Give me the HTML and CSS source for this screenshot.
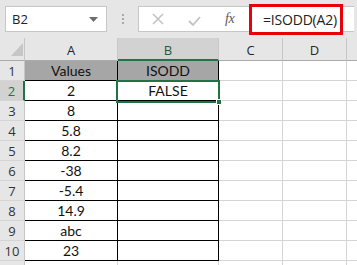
FILE: index.html
```html
<!DOCTYPE html>
<html>
<head>
<meta charset="utf-8">
<link rel="stylesheet" href="styles.css">
</head>
<body>
<div class="app">
  <div class="toolbar">
    <div class="namebox"><span>B2</span><svg class="dd" width="9" height="5" viewBox="0 0 9 5"><path d="M0 0H9L4.5 5Z" fill="#6d6d6d"/></svg></div>
    <div class="dots"><i></i><i></i><i></i></div>
    <div class="fbar">
      <svg class="ic-x" width="12" height="12" viewBox="0 0 12 12"><path d="M1 1L11 11M11 1L1 11" stroke="#c3c3c3" stroke-width="1.6"/></svg>
      <svg class="ic-ok" width="13" height="10" viewBox="0 0 13 10"><path d="M1 5L5 9L12 1" stroke="#c3c3c3" stroke-width="1.8" fill="none"/></svg>
      <span class="fx">fx</span>
      <div class="formula">=ISODD(A2)</div>
    </div>
  </div>
  <div class="grid">
    <div class="corner"><svg width="12" height="13" viewBox="0 0 12 13"><path d="M12 0V13H0Z" fill="#c6c6c6"/></svg></div>
    <div class="ch">A</div>
    <div class="ch sel">B</div>
    <div class="ch">C</div>
    <div class="ch">D</div>
    <div class="ch last"></div>

    <div class="rh">1</div><div class="c t hd">Values</div><div class="c t hd">ISODD</div><div class="c"></div><div class="c"></div><div class="c last"></div>
    <div class="rh sel">2</div><div class="c t">2</div><div class="c t">FALSE</div><div class="c"></div><div class="c"></div><div class="c last"></div>
    <div class="rh">3</div><div class="c t">8</div><div class="c t"></div><div class="c"></div><div class="c"></div><div class="c last"></div>
    <div class="rh">4</div><div class="c t">5.8</div><div class="c t"></div><div class="c"></div><div class="c"></div><div class="c last"></div>
    <div class="rh">5</div><div class="c t">8.2</div><div class="c t"></div><div class="c"></div><div class="c"></div><div class="c last"></div>
    <div class="rh">6</div><div class="c t">-38</div><div class="c t"></div><div class="c"></div><div class="c"></div><div class="c last"></div>
    <div class="rh">7</div><div class="c t">-5.4</div><div class="c t"></div><div class="c"></div><div class="c"></div><div class="c last"></div>
    <div class="rh">8</div><div class="c t">14.9</div><div class="c t"></div><div class="c"></div><div class="c"></div><div class="c last"></div>
    <div class="rh">9</div><div class="c t">abc</div><div class="c t"></div><div class="c"></div><div class="c"></div><div class="c last"></div>
    <div class="rh">10</div><div class="c t">23</div><div class="c t"></div><div class="c"></div><div class="c"></div><div class="c last"></div>
    <div class="rh"></div><div class="c"></div><div class="c"></div><div class="c"></div><div class="c"></div><div class="c last"></div>

    <div class="selbox"><i class="handle"></i></div>
  </div>
</div>
</body>
</html>
```
FILE: styles.css
```css
* { box-sizing: border-box; }
html, body { margin: 0; padding: 0; }
body { width: 357px; height: 265px; overflow: hidden; background: #fff; }
.app { width: 357px; height: 265px; overflow: hidden; }

.toolbar {
  height: 38px;
  background: #e6e6e6;
  position: relative;
  display: flex;
  align-items: flex-start;
  padding-top: 6px;
}
.namebox {
  margin-left: 5px;
  width: 102px;
  height: 26px;
  background: #fff;
  border: 1px solid #c6c6c6;
  display: flex;
  align-items: center;
  justify-content: space-between;
  padding: 0 8px 0 6px;
  font: 13px "Open Sans", "Liberation Sans", sans-serif;
  color: #222;
}
.dots {
  width: 31px;
  height: 26px;
  display: flex;
  flex-direction: column;
  align-items: center;
  justify-content: center;
  gap: 2px;
}
.dots i { display: block; width: 2px; height: 2px; background: #a9a9a9; }
.fbar {
  width: 216px;
  height: 26px;
  background: #fff;
  border: 1px solid #c6c6c6;
  border-right: none;
  display: flex;
  align-items: center;
  position: relative;
}
.ic-x { margin-left: 13px; }
.ic-ok { margin-left: 24px; margin-top: 3px; }
.fx {
  margin-left: 24px;
  font: italic 14px "Liberation Serif", "DejaVu Serif", serif;
  color: #5a5a5a;
  letter-spacing: -0.5px;
}
.formula {
  position: absolute;
  left: 110px;
  top: -3px;
  width: 94px;
  height: 31px;
  border: 3px solid #e8000b;
  background: #fff;
  font: 14px "Open Sans", "Liberation Sans", sans-serif;
  color: #222;
  display: flex;
  align-items: center;
  padding-left: 11px;
  letter-spacing: -0.2px;
}

.grid {
  position: relative;
  display: grid;
  grid-template-columns: 25px 93px 101px 64px 64px 10px;
  grid-template-rows: 23px repeat(10, 20px) 20px;
  font-family: "Lato", "Liberation Sans", sans-serif;
}
.corner {
  background: #e6e6e6;
  border-right: 1px solid #c6c6c6;
  border-bottom: 1px solid #ababab;
  display: flex;
  align-items: flex-end;
  justify-content: flex-end;
  padding: 0 1px 4px 0;
}
.ch {
  background: #e6e6e6;
  border-right: 1px solid #c6c6c6;
  border-bottom: 1px solid #ababab;
  display: flex;
  align-items: center;
  justify-content: center;
  font: 13px "Open Sans", "Liberation Sans", sans-serif;
  color: #262626;
  padding-top: 1px;
}
.ch.sel {
  background: #d2d2d2;
  border-bottom: 2px solid #217346;
  color: #1e5c38;
  padding-top: 2px;
}
.ch.last { border-right: none; }
.rh {
  background: #e6e6e6;
  border-right: 1px solid #c6c6c6;
  border-bottom: 1px solid #d4d4d4;
  display: flex;
  align-items: center;
  justify-content: center;
  font: 13px "Open Sans", "Liberation Sans", sans-serif;
  color: #333;
}
.rh.sel {
  background: #d2d2d2;
  border-right: 2px solid #217346;
  color: #217346;
}
.c {
  border-right: 1px solid #d4d4d4;
  border-bottom: 1px solid #d4d4d4;
  display: flex;
  align-items: center;
  justify-content: center;
  font-size: 14px;
  color: #111;
}
.c.last { border-right: none; }
.c.t { border-right-color: #000; border-bottom-color: #000; }
.c.hd { background: #a6a6a6; }

.selbox {
  position: absolute;
  left: 116px;
  top: 42px;
  width: 104px;
  height: 23px;
  border: 2px solid #217346;
  pointer-events: none;
}
.handle {
  position: absolute;
  right: -4px;
  bottom: -4px;
  width: 6px;
  height: 6px;
  background: #217346;
  border: 1px solid #fff;
  display: block;
}
```
